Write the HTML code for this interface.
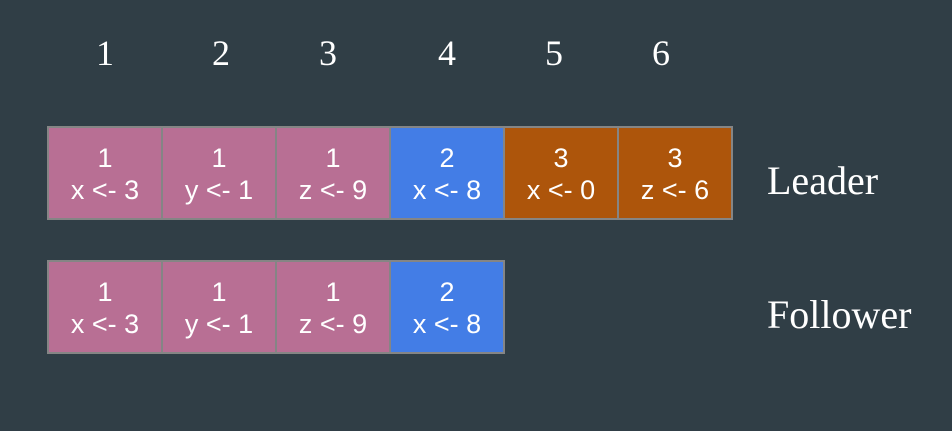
<!DOCTYPE html>
<html><head><style>
body{margin:0;width:952px;height:431px;background:#303e46;position:relative;overflow:hidden}
.n{position:absolute;top:32px;font:36px "Liberation Serif",serif;color:#fff;width:40px;text-align:center}
.c{position:absolute;width:112px;height:90px;border:1px solid #858585;outline:1px solid #858585;color:#fff;font:27px/32px "Liberation Sans",sans-serif;text-align:center}
.c div:first-child{margin-top:14px}
.p{background:#b86f94}.b{background:#437de6}.o{background:#ad550b}
.l{position:absolute;left:767px;font:40px "Liberation Serif",serif;color:#fff}
</style></head><body>
<div class="n" style="left:85px">1</div>
<div class="n" style="left:201px">2</div>
<div class="n" style="left:308px">3</div>
<div class="n" style="left:427px">4</div>
<div class="n" style="left:534px">5</div>
<div class="n" style="left:641px">6</div>

<div class="c p" style="left:48px;top:127px"><div>1</div><div>x &lt;- 3</div></div>
<div class="c p" style="left:162px;top:127px"><div>1</div><div>y &lt;- 1</div></div>
<div class="c p" style="left:276px;top:127px"><div>1</div><div>z &lt;- 9</div></div>
<div class="c b" style="left:390px;top:127px"><div>2</div><div>x &lt;- 8</div></div>
<div class="c o" style="left:504px;top:127px"><div>3</div><div>x &lt;- 0</div></div>
<div class="c o" style="left:618px;top:127px"><div>3</div><div>z &lt;- 6</div></div>
<div class="l" style="top:157px">Leader</div>

<div class="c p" style="left:48px;top:261px"><div>1</div><div>x &lt;- 3</div></div>
<div class="c p" style="left:162px;top:261px"><div>1</div><div>y &lt;- 1</div></div>
<div class="c p" style="left:276px;top:261px"><div>1</div><div>z &lt;- 9</div></div>
<div class="c b" style="left:390px;top:261px"><div>2</div><div>x &lt;- 8</div></div>
<div class="l" style="top:291px">Follower</div>
</body></html>
